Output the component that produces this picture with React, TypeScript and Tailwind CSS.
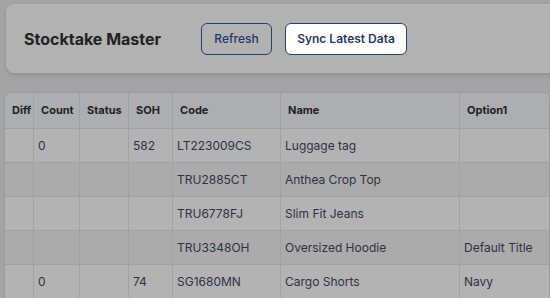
import React from "react";

const rows = [
  { diff: "", count: "0", status: "", soh: "582", code: "LT223009CS", name: "Luggage tag", option: "" },
  { diff: "", count: "", status: "", soh: "", code: "TRU2885CT", name: "Anthea Crop Top", option: "" },
  { diff: "", count: "", status: "", soh: "", code: "TRU6778FJ", name: "Slim Fit Jeans", option: "" },
  { diff: "", count: "", status: "", soh: "", code: "TRU3348OH", name: "Oversized Hoodie", option: "Default Title" },
  { diff: "", count: "0", status: "", soh: "74", code: "SG1680MN", name: "Cargo Shorts", option: "Navy" },
];

const cols = [
  { key: "diff", label: "Diff", w: "w-[28px]" },
  { key: "count", label: "Count", w: "w-[46px]" },
  { key: "status", label: "Status", w: "w-[49px]" },
  { key: "soh", label: "SOH", w: "w-[44px]" },
  { key: "code", label: "Code", w: "w-[108px]" },
  { key: "name", label: "Name", w: "w-[179px]" },
  { key: "option", label: "Option1", w: "w-[90px]" },
] as const;

export default function App() {
  return (
    <div className="w-[550px] h-[298px] overflow-hidden bg-[#a4a4a4] font-['Inter',sans-serif]">
      {/* Header card */}
      <div className="ml-[6px] mr-[-20px] mt-[4px] h-[69px] rounded-lg bg-[#b2b2b2] shadow-[0_2px_4px_rgba(0,0,0,0.12)] flex items-center pl-[18px]">
        <h1 className="text-[16px] font-bold text-[#222] w-[177px]">Stocktake Master</h1>
        <div className="h-[32px] w-[71px] rounded-md border-[1.5px] border-[#25406b] flex items-center justify-center text-[12px] font-medium text-[#1f3a66] cursor-pointer">
          Refresh
        </div>
        <div className="ml-[13px] h-[32px] w-[122px] rounded-md border-[1.5px] border-[#25406b] bg-white flex items-center justify-center text-[12px] font-semibold text-[#1f3a66] cursor-pointer">
          Sync Latest Data
        </div>
      </div>

      {/* Table */}
      <div className="ml-[5px] mt-[20px] w-[544px] rounded-t-md overflow-hidden bg-[#b3b3b3] shadow-[0_0_2px_rgba(0,0,0,0.15)]">
        <div className="flex h-[36px] bg-[#adaeb1] border-b border-[#a2a2a2]">
          {cols.map((c, i) => (
            <div
              key={c.key}
              className={`${c.w} shrink-0 flex items-center pl-[7px] text-[11px] font-bold text-[#222] ${i > 0 ? "border-l border-[#a2a2a2]" : ""} ${c.key === "option" ? "grow" : ""}`}
            >
              {c.label}
            </div>
          ))}
        </div>
        {rows.map((r, ri) => (
          <div
            key={r.code}
            className={`flex h-[34px] border-b border-[#a2a2a2] ${ri % 2 === 1 ? "bg-[#ababab]" : "bg-[#b3b3b3]"}`}
          >
            {cols.map((c, i) => (
              <div
                key={c.key}
                className={`${c.w} shrink-0 flex items-center pl-[4px] text-[12px] text-[#2e3244] ${i > 0 ? "border-l border-[#a2a2a2]" : ""} ${c.key === "option" ? "grow" : ""}`}
              >
                {r[c.key]}
              </div>
            ))}
          </div>
        ))}
      </div>
    </div>
  );
}
